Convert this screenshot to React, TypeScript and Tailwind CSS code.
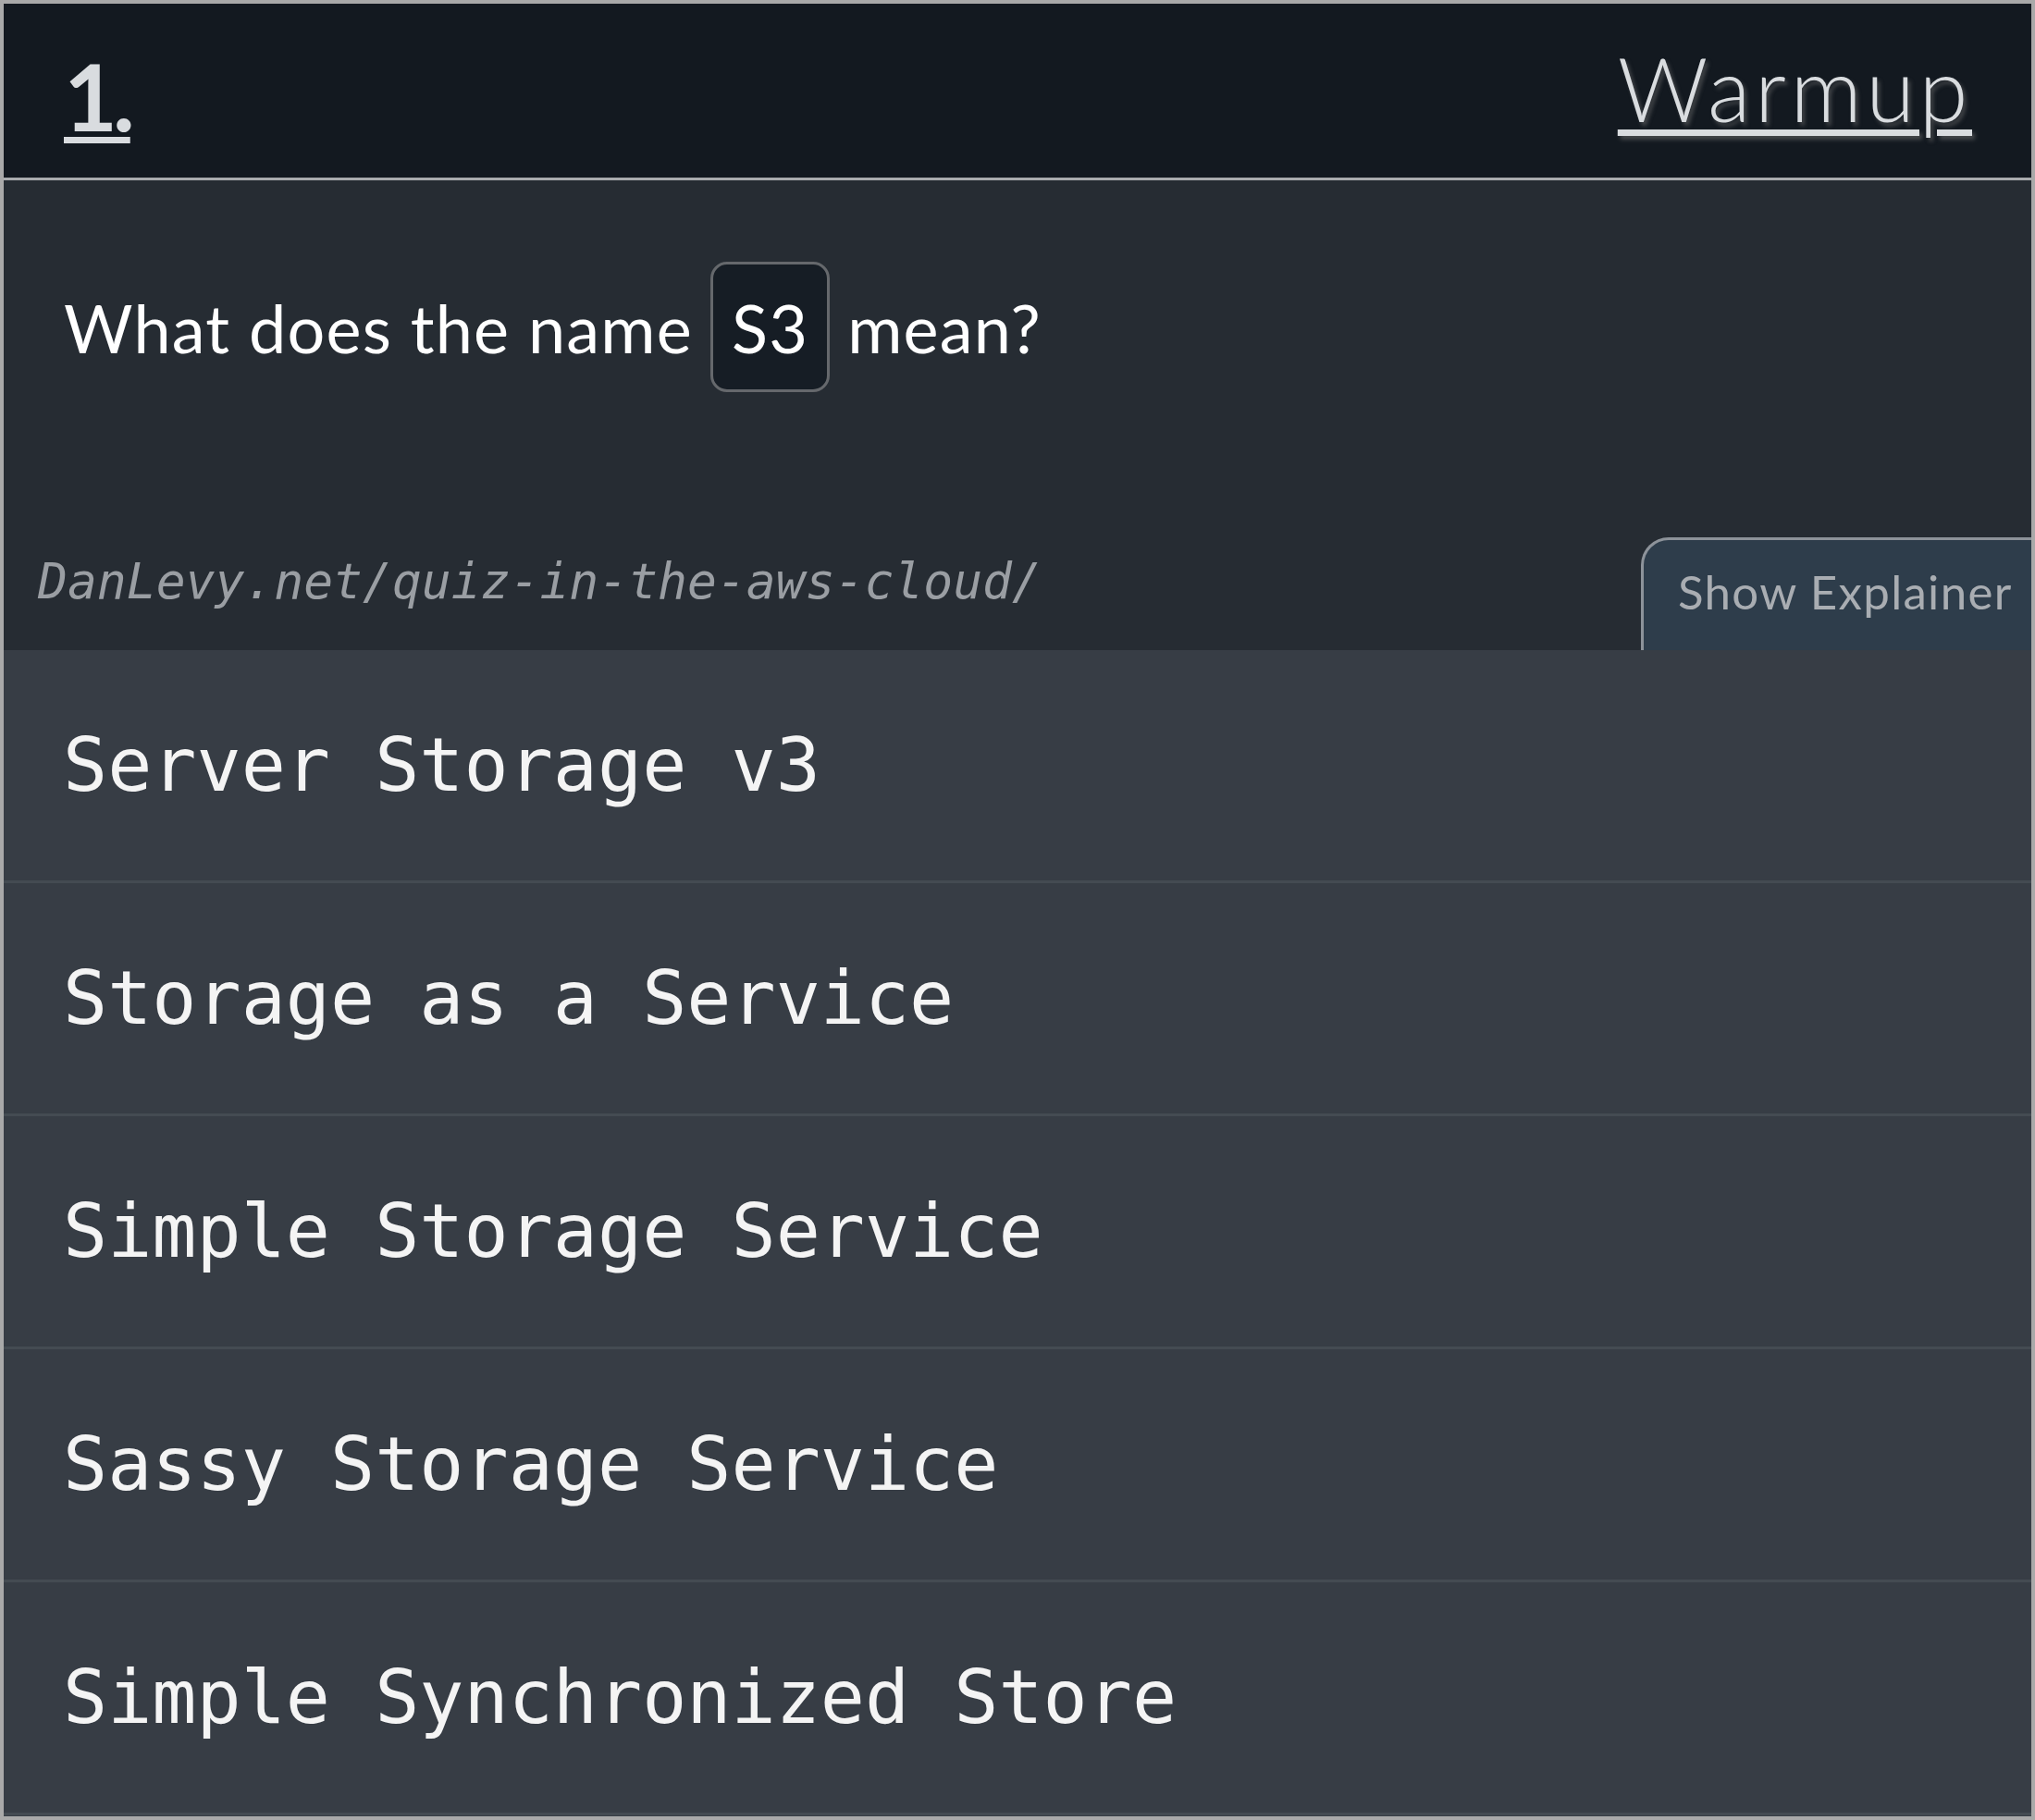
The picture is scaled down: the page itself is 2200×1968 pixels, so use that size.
import React from "react";

const options = [
  "Server Storage v3",
  "Storage as a Service",
  "Simple Storage Service",
  "Sassy Storage Service",
  "Simple Synchronized Store",
];

export default function App() {
  return (
    <div className="w-[2200px] h-[1968px] border-4 border-[#a9a9a9] bg-[#373d45] flex flex-col overflow-hidden font-[Lato,sans-serif]">
      <header className="h-[191px] shrink-0 bg-[#131920] border-b-[3px] border-[#a9abad] flex justify-between items-start pl-[65px] pr-[64px]">
        <span className="mt-[49px] text-[100px] leading-none font-bold text-[#d9dcdf] underline decoration-[7px] underline-offset-[6px] tracking-[-5px]">
          1.
        </span>
        <span className="mt-[43px] text-[96px] leading-none font-light text-[#d9dcdf] underline decoration-[7px] underline-offset-[8px] tracking-[4.5px] [text-shadow:3px_4px_4px_rgba(110,110,110,0.55)]">
          Warmup
        </span>
      </header>

      <section className="h-[508px] shrink-0 bg-[#262c33] flex flex-col justify-between">
        <div className="pt-[88px] pl-[65px] flex items-center gap-[19px] text-[72px] text-white leading-none tracking-[1.2px]">
          <span>What does the name</span>
          <span className="h-[141px] flex items-center px-[20px] border-[3px] border-[#65686c] rounded-[18px] bg-[#161d25]">
            S3
          </span>
          <span>mean?</span>
        </div>
        <div className="flex justify-between items-start h-[122px]">
          <span className="pt-[21px] pl-[37px] text-[53px] leading-none italic text-[#9a9ea3] font-['DejaVu_Sans_Mono',monospace]">
            DanLevy.net/quiz-in-the-aws-cloud/
          </span>
          <div className="w-[422px] h-[122px] bg-[#2e3d4b] border-t-[3px] border-l-[3px] border-[#8d939a] rounded-tl-[30px] pl-[37px] pt-[30px] text-[51px] leading-none text-[#a9adb2] whitespace-nowrap tracking-[1.3px]">
            Show Explainer
          </div>
        </div>
      </section>

      {options.map((o) => (
        <div
          key={o}
          className="h-[252px] shrink-0 border-b-[3px] border-[#444b52] flex items-center pl-[64px] text-[80px] text-[#f4f4f4] whitespace-pre font-['DejaVu_Sans_Mono',monospace]"
        >
          {o}
        </div>
      ))}
    </div>
  );
}
